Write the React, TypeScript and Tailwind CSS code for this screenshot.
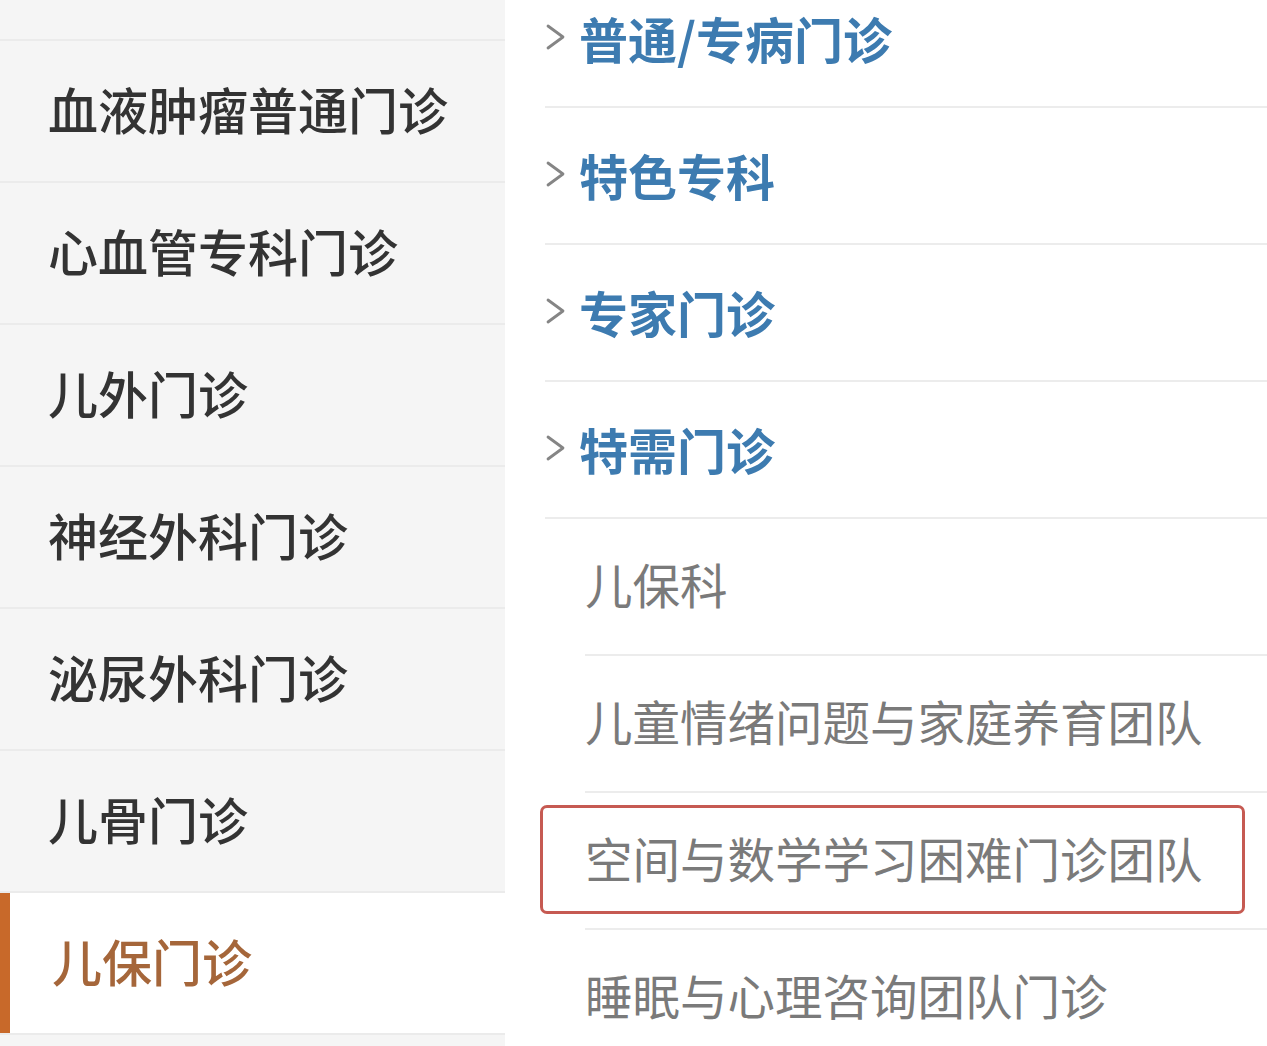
import React from 'react';

const LEFT_ITEMS = ['血液肿瘤普通门诊', '心血管专科门诊', '儿外门诊', '神经外科门诊', '泌尿外科门诊', '儿骨门诊'];
const HEADINGS = ['普通/专病门诊', '特色专科', '专家门诊', '特需门诊'];
const SUB_ITEMS = ['儿保科', '儿童情绪问题与家庭养育团队', '空间与数学学习困难门诊团队', '睡眠与心理咨询团队门诊'];

const font = { fontFamily: '"Noto Sans CJK SC", "Noto Sans", sans-serif' };

const Chevron = () => (
  <svg className="w-[22px] h-[28px] shrink-0" viewBox="0 0 22 28" fill="none">
    <path d="M3 3 L18 14 L3 25" stroke="#858585" strokeWidth="2.8" strokeLinecap="round" strokeLinejoin="round" />
  </svg>
);

export default function App() {
  return (
    <div className="w-[1267px] h-[1046px] overflow-hidden flex bg-white" style={font}>
      <aside className="w-[505px] shrink-0 bg-[#f5f5f5] flex flex-col">
        <div className="h-[41px] shrink-0 border-b-2 border-[#ebebeb]" />
        {LEFT_ITEMS.map(item => (
          <div key={item} className="h-[142px] shrink-0 flex items-center pl-[48px] pb-[6px] border-b-2 border-[#ebebeb]">
            <span className="text-[50px] leading-none font-medium text-[#333333]">{item}</span>
          </div>
        ))}
        <div className="h-[142px] shrink-0 flex items-center bg-white border-b-2 border-[#ebebeb]">
          <div className="w-[10px] self-stretch bg-[#c8692a]" />
          <span className="pl-[42px] pb-[6px] text-[50px] leading-none font-medium text-[#a5663a]">儿保门诊</span>
        </div>
        <div className="flex-1" />
      </aside>

      <main className="flex-1 flex flex-col mt-[-29px]">
        {HEADINGS.map(h => (
          <div key={h} className="h-[137px] shrink-0 ml-[40px] pb-[3px] flex items-center gap-[12px] border-b-2 border-[#ececec]">
            <Chevron />
            <span className="text-[49px] leading-none font-bold text-[#3d7bb0]">{h}</span>
          </div>
        ))}
        {SUB_ITEMS.map((s, i) => (
          <div key={s} className="relative h-[137px] shrink-0 ml-[80px] pb-[6px] flex items-center border-b-2 border-[#ececec]">
            {i === 2 && (
              <div className="absolute left-[-45px] right-[22px] top-[12px] bottom-[14px] border-[3px] border-[#c65a52] rounded-[7px]" />
            )}
            <span className="text-[47.5px] leading-none font-normal text-[#7a7a7a]">{s}</span>
          </div>
        ))}
      </main>
    </div>
  );
}
